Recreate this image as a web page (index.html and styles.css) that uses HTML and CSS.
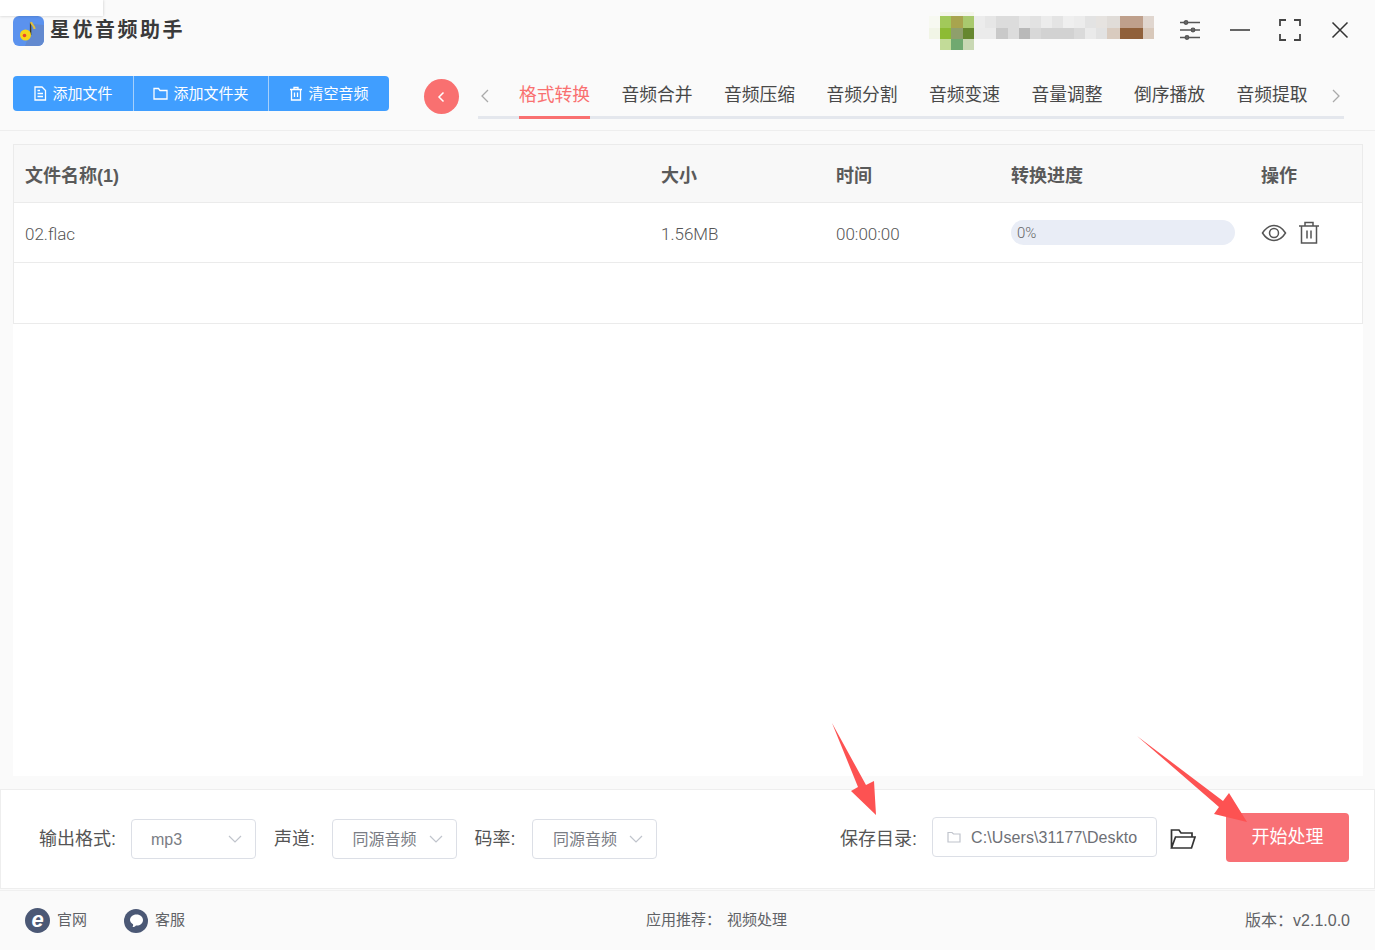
FILE: index.html
```html
<!DOCTYPE html>
<html lang="zh-CN">
<head>
  <meta charset="UTF-8">
  <title>星优音频助手</title>
  <link rel="stylesheet" href="styles.css">
</head>
<body>
  <div class="corner-patch"></div>

  <div class="header">
    <div class="title-row">
      <svg class="logo" width="31" height="30" viewBox="0 0 31 30">
        <rect width="31" height="30" rx="6" fill="#5b92ee"/>
        <path d="M31 9V24a6 6 0 0 1-6 6H12L20 8z" fill="#6289cf"/>
        <path d="M17.6 6.500V19" stroke="#3f3a20" stroke-width="1.400" fill="none"/>
        <path d="M18 6c.5 3 3.500 3 3.500 7" stroke="#e0c040" stroke-width="2" fill="none"/>
        <circle cx="12.500" cy="19" r="5.500" fill="#f7d417"/>
        <circle cx="11.500" cy="19.500" r="1.800" fill="#e8452c"/>
      </svg>
      <div class="app-title">星优音频助手</div>
      <svg class="mosaic" width="225" height="38" viewBox="929 12 225 38">
        <rect x="929" y="16" width="11" height="12" fill="#f7f9f1"/>
        <rect x="929" y="28" width="11" height="11" fill="#f1f5e6"/>
        <rect x="940" y="12" width="34" height="4" fill="#f4f6ea"/>
        <rect x="940" y="16" width="11" height="12" fill="#a2c95a"/>
        <rect x="951" y="16" width="12" height="12" fill="#a8a44e"/>
        <rect x="963" y="16" width="11" height="12" fill="#a9c96e"/>
        <rect x="940" y="28" width="11" height="11" fill="#8dbb34"/>
        <rect x="951" y="28" width="12" height="11" fill="#8f9f6c"/>
        <rect x="963" y="28" width="11" height="11" fill="#66872f"/>
        <rect x="940" y="39" width="11" height="11" fill="#c2db98"/>
        <rect x="951" y="39" width="12" height="11" fill="#70a970"/>
        <rect x="963" y="39" width="11" height="11" fill="#c9d8b4"/>
        <rect x="974" y="16" width="11" height="12" fill="#ececec"/>
        <rect x="985" y="16" width="11" height="12" fill="#e6e6e6"/>
        <rect x="996" y="16" width="23" height="12" fill="#dcdcdc"/>
        <rect x="1019" y="16" width="11" height="12" fill="#e6e6e6"/>
        <rect x="1030" y="16" width="11" height="12" fill="#e2e2e2"/>
        <rect x="1041" y="16" width="11" height="12" fill="#ececec"/>
        <rect x="1052" y="16" width="11" height="12" fill="#e4e4e4"/>
        <rect x="1063" y="16" width="11" height="12" fill="#efefef"/>
        <rect x="1074" y="16" width="11" height="12" fill="#ececec"/>
        <rect x="1085" y="16" width="11" height="12" fill="#e3e3e3"/>
        <rect x="1096" y="16" width="11" height="12" fill="#e6e3e0"/>
        <rect x="1107" y="16" width="13" height="12" fill="#e0dcd8"/>
        <rect x="1120" y="16" width="23" height="12" fill="#bfa08c"/>
        <rect x="1143" y="16" width="11" height="12" fill="#e0d6cf"/>
        <rect x="974" y="28" width="22" height="11" fill="#ebebeb"/>
        <rect x="996" y="28" width="12" height="11" fill="#c9c9c9"/>
        <rect x="1008" y="28" width="11" height="11" fill="#dcdcdc"/>
        <rect x="1019" y="28" width="11" height="11" fill="#b9b9b9"/>
        <rect x="1030" y="28" width="11" height="11" fill="#d8d8d8"/>
        <rect x="1041" y="28" width="33" height="11" fill="#d2d2d2"/>
        <rect x="1074" y="28" width="11" height="11" fill="#dadada"/>
        <rect x="1085" y="28" width="11" height="11" fill="#eaeaea"/>
        <rect x="1096" y="28" width="11" height="11" fill="#e2e2e2"/>
        <rect x="1107" y="28" width="13" height="11" fill="#d9cbbf"/>
        <rect x="1120" y="28" width="23" height="11" fill="#90603a"/>
        <rect x="1143" y="28" width="11" height="11" fill="#d8c8ba"/>
      </svg>
      <div class="win-controls">
        <div class="win-btn">
          <svg width="22" height="22" viewBox="0 0 22 22" fill="none" stroke="#555" stroke-width="1.300">
            <path d="M1 3.500H21M1 11H21M1 18.500H21"/>
            <circle cx="7" cy="3.500" r="1.800" fill="#666"/>
            <circle cx="14" cy="11" r="1.800" fill="#666"/>
            <circle cx="8" cy="18.500" r="1.800" fill="#666"/>
          </svg>
        </div>
        <div class="win-btn">
          <svg width="22" height="22" viewBox="0 0 22 22" fill="none" stroke="#333" stroke-width="1.500"><path d="M1 11H21"/></svg>
        </div>
        <div class="win-btn">
          <svg width="24" height="24" viewBox="0 0 24 24" fill="none" stroke="#444" stroke-width="1.800"><path d="M2 8V2H8M16 2H22V8M22 16V22H16M8 22H2V16"/></svg>
        </div>
        <div class="win-btn">
          <svg width="18" height="18" viewBox="0 0 18 18" fill="none" stroke="#333" stroke-width="1.500"><path d="M1.500 1.500L16.500 16.500M16.500 1.500L1.500 16.500"/></svg>
        </div>
      </div>
    </div>

    <div class="tool-row">
      <div class="btn-group">
        <div class="tool-btn btn-file">
          <svg width="14" height="15" viewBox="0 0 14 15" fill="none" stroke="#fff" stroke-width="1.300"><path d="M2 1H9L12.500 4.500V14H2zM4.500 7.500H10M4.500 10.500H10M4.500 4.500H7"/></svg>
          <span>添加文件</span>
        </div>
        <div class="tool-btn btn-folder">
          <svg width="15" height="13" viewBox="0 0 15 13" fill="none" stroke="#fff" stroke-width="1.300"><path d="M1 2V12H14V3.500H7L5.500 1.500H1z"/></svg>
          <span>添加文件夹</span>
        </div>
        <div class="tool-btn btn-clear">
          <svg width="14" height="15" viewBox="0 0 14 15" fill="none" stroke="#fff" stroke-width="1.300"><path d="M1 3.500H13M5 3.500V1.500H9V3.500M2.500 3.500V14H11.500V3.500M5.500 6.500V11M8.500 6.500V11"/></svg>
          <span>清空音频</span>
        </div>
      </div>

      <div class="back-circle">
        <svg width="10" height="12" viewBox="0 0 10 12" fill="none" stroke="#fff" stroke-width="1.500"><path d="M6.500 1.500L2 6L6.500 10.500"/></svg>
      </div>

      <div class="tabs">
        <svg class="tab-prev" width="10" height="14" viewBox="0 0 10 14" fill="none" stroke="#aaa" stroke-width="1.300"><path d="M8 1L2 7L8 13"/></svg>
        <div class="tab active">格式转换</div>
        <div class="tab">音频合并</div>
        <div class="tab">音频压缩</div>
        <div class="tab">音频分割</div>
        <div class="tab">音频变速</div>
        <div class="tab">音量调整</div>
        <div class="tab">倒序播放</div>
        <div class="tab">音频提取</div>
        <svg class="tab-next" width="10" height="14" viewBox="0 0 10 14" fill="none" stroke="#aaa" stroke-width="1.300"><path d="M2 1L8 7L2 13"/></svg>
      </div>
    </div>
  </div>

  <div class="main">
    <div class="panel">
      <div class="table">
        <div class="table-row table-head">
          <div>文件名称(1)</div>
          <div>大小</div>
          <div>时间</div>
          <div>转换进度</div>
          <div>操作</div>
        </div>
        <div class="table-row table-body">
          <div class="cell-text">02.flac</div>
          <div class="cell-text">1.56MB</div>
          <div class="cell-text">00:00:00</div>
          <div><div class="progress">0%</div></div>
          <div class="actions">
            <svg width="26" height="20" viewBox="0 0 26 20" fill="none" stroke="#555" stroke-width="1.500">
              <path d="M1.500 10C5 4.500 9 2.500 13 2.500S21 4.500 24.500 10C21 15.500 17 17.500 13 17.500S5 15.500 1.500 10z"/>
              <circle cx="13" cy="10" r="4.500"/>
            </svg>
            <svg width="22" height="23" viewBox="0 0 22 23" fill="none" stroke="#555" stroke-width="1.500">
              <path d="M1 5H21M7 5V1.500H15V5M3.500 5V22H18.500V5M9 9.500V17.500M13 9.500V17.500"/>
            </svg>
          </div>
        </div>
        <div class="table-empty"></div>
      </div>
    </div>
  </div>

  <div class="options">
    <div class="opt-label">输出格式:</div>
    <div class="select"><span class="select-latin">mp3</span><svg width="14" height="8" viewBox="0 0 14 8" fill="none" stroke="#c0c4cc" stroke-width="1.200"><path d="M1 1L7 7L13 1"/></svg></div>
    <div class="opt-label opt-short">声道:</div>
    <div class="select"><span>同源音频</span><svg width="14" height="8" viewBox="0 0 14 8" fill="none" stroke="#c0c4cc" stroke-width="1.200"><path d="M1 1L7 7L13 1"/></svg></div>
    <div class="opt-label opt-short">码率:</div>
    <div class="select"><span>同源音频</span><svg width="14" height="8" viewBox="0 0 14 8" fill="none" stroke="#c0c4cc" stroke-width="1.200"><path d="M1 1L7 7L13 1"/></svg></div>

    <div class="opt-label save-label">保存目录:</div>
    <div class="path-input">
      <svg width="14" height="12" viewBox="0 0 14 12" fill="none" stroke="#c0c4cc" stroke-width="1.200"><path d="M1 1.500V11H13V3H6.500L5 1.500z"/></svg>
      <span>C:\Users\31177\Deskto</span>
    </div>
    <svg class="open-folder" width="26" height="22" viewBox="0 0 26 22" fill="none" stroke="#333" stroke-width="1.700">
      <path d="M1.500 20V2H9L11 5H22V9M1.500 20L5.500 9H25L21.500 20z"/>
    </svg>
    <div class="start-btn">开始处理</div>
  </div>

  <div class="footer">
    <div class="foot-link">
      <svg width="25" height="25" viewBox="0 0 25 25">
        <circle cx="12.500" cy="12.500" r="12.500" fill="#4b5875"/>
        <text x="12.500" y="19" text-anchor="middle" class="ie-mark">e</text>
      </svg>
      <span class="foot-text">官网</span>
    </div>
    <div class="foot-link foot-service">
      <svg width="24" height="24" viewBox="0 0 24 24">
        <circle cx="12" cy="12" r="12" fill="#4b5875"/>
        <path d="M12.500 5.500C16.500 5.500 19 8 19 11C19 14.500 15.500 17 12 16.500C11 17.500 10 18 8.500 18C9.200 17 9.300 16 9 15.200C7 14 6 12.500 6 11C6 8 8.500 5.500 12.500 5.500z" fill="#fff"/>
      </svg>
      <span class="foot-text">客服</span>
    </div>
    <div class="foot-recommend foot-text">
      <span>应用推荐&#xFF1A;</span>
      <span>视频处理</span>
    </div>
    <div class="foot-version foot-text">版本&#xFF1A;<span class="version-num">v2.1.0.0</span></div>
  </div>

  <!-- 标注箭头 -->
  <svg class="arrow-layer" width="1375" height="950" viewBox="0 0 1375 950">
    <polygon points="832,723 866,785 874,781 876,815 851,791 858,787" fill="#fd5252"/>
    <polygon points="1137,736 1223,801 1229,793 1247,822 1214,814 1219,807" fill="#fd5252"/>
  </svg>
</body>
</html>
```

FILE: styles.css
```css
* {
  margin: 0;
  padding: 0;
  box-sizing: border-box;
}
body {
  font-family: "Liberation Sans", "Noto Sans CJK SC", sans-serif;
  background: #fafafa;
  color: #333;
  width: 1375px;
  height: 950px;
  overflow: hidden;
  display: flex;
  flex-direction: column;
  position: relative;
}
.corner-patch {
  position: absolute;
  left: 0;
  top: 0;
  width: 103px;
  height: 16px;
  background: #fff;
  box-shadow: 0 0 3px rgba(0, 0, 0, 0.2);
}

/* 顶部 */
.header {
  height: 131px;
  padding-top: 16px;
  border-bottom: 1px solid #eeeeee;
}
.title-row {
  display: flex;
  align-items: center;
  height: 30px;
  padding: 0 10px 0 13px;
}
.logo {
  flex-shrink: 0;
}
.app-title {
  margin: 0 0 5px 6px;
  font-size: 20px;
  font-weight: bold;
  letter-spacing: 2.500px;
  color: #3a3a3a;
}
.mosaic {
  margin-left: auto;
}
.win-controls {
  display: flex;
  margin: 0 0 2px 11px;
}
.win-btn {
  width: 50px;
  display: flex;
  justify-content: center;
  align-items: center;
}
.tool-row {
  display: flex;
  align-items: flex-start;
  margin-top: 30px;
  padding-left: 13px;
}
.btn-group {
  display: flex;
  height: 35px;
  border-radius: 4px;
  overflow: hidden;
  background: #409eff;
}
.tool-btn {
  display: flex;
  align-items: center;
  justify-content: center;
  gap: 5px;
  color: #fff;
  font-size: 15px;
  border-right: 1px solid #a6d0fb;
}
.tool-btn span {
  margin-bottom: 3px;
}
.tool-btn:last-child {
  border-right: none;
}
.btn-file {
  width: 121px;
}
.btn-folder {
  width: 135px;
}
.btn-clear {
  width: 120px;
}
.back-circle {
  width: 35px;
  height: 35px;
  margin: 3px 0 0 35px;
  border-radius: 50%;
  background: #f97070;
  display: flex;
  align-items: center;
  justify-content: center;
}
.tabs {
  width: 866px;
  height: 43px;
  margin-left: 19px;
  border-bottom: 3px solid #e4e7ed;
  display: flex;
  align-items: flex-start;
  gap: 31.500px;
}
.tab-prev {
  margin: 13px -30px 0 2px;
}
.tab {
  height: 43px;
  width: 71px;
  line-height: 38px;
  font-size: 17.800px;
  white-space: nowrap;
  color: #484848;
  border-bottom: 3px solid transparent;
}
.tab-prev + .tab {
  margin-left: 27.500px;
}
.tab.active {
  color: #f97070;
  border-bottom-color: #f97070;
}
.tab-next {
  margin: 13px 0 0 -8px;
}

/* 文件列表 */
.main {
  flex: 1;
  padding: 13px 12px 13px 13px;
  display: flex;
}
.panel {
  flex: 1;
  background: #fff;
}
.table {
  border: 1px solid #ebebeb;
}
.table-row {
  display: grid;
  grid-template-columns: 635px 175px 175px 250px 113px;
  align-items: center;
  border-bottom: 1px solid #ebebeb;
}
.table-row > div {
  padding-left: 12px;
}
.table-row > div:first-child {
  padding-left: 11px;
}
.table-head {
  height: 58px;
  background: #f8f8f8;
  font-size: 18px;
  font-weight: bold;
  color: #5a5a5a;
}
.table-body {
  height: 60px;
  font-family: Roboto, "Noto Sans CJK SC", sans-serif;
  font-size: 17px;
  font-weight: 300;
  color: #555;
}
.cell-text {
  padding-top: 2px;
}
.table-empty {
  height: 60px;
}
.progress {
  width: 224px;
  height: 25px;
  line-height: 27px;
  padding-left: 6px;
  border-radius: 13px;
  background: #e9edf6;
  font-size: 15px;
  color: #666;
}
.actions {
  display: flex;
  align-items: center;
  gap: 11px;
}

/* 底部设置 */
.options {
  height: 100px;
  background: #fff;
  border: 1px solid #eeeeee;
  display: flex;
  align-items: center;
  padding: 0 25px 0 38px;
}
.opt-label {
  font-size: 18px;
  color: #555;
  margin: 0 15px 4px 0;
  white-space: nowrap;
}
.opt-short {
  width: 57.500px;
  margin-right: 0;
}
.select {
  width: 125px;
  height: 40px;
  margin-right: 18px;
  padding: 0 13px 0 20px;
  border: 1px solid #dcdfe6;
  border-radius: 4px;
  display: flex;
  align-items: center;
  justify-content: space-between;
  font-size: 16px;
  color: #7a7d84;
}
.select span {
  white-space: nowrap;
  margin-bottom: 2px;
}
.select .select-latin {
  margin: 1px 0 0 -1px;
}
.save-label {
  margin-left: auto;
}
.path-input {
  width: 225px;
  height: 40px;
  margin-bottom: 4px;
  padding-left: 14px;
  border: 1px solid #dcdfe6;
  border-radius: 4px;
  display: flex;
  align-items: center;
  gap: 10px;
  font-size: 16px;
  letter-spacing: 0.100px;
  color: #6e7076;
  white-space: nowrap;
}
.path-input span {
  margin-top: 2px;
}
.open-folder {
  margin: 0 30px 0 13px;
}
.start-btn {
  width: 123px;
  height: 49px;
  line-height: 49px;
  margin-top: -4px;
  text-align: center;
  border-radius: 4px;
  background: #f87075;
  color: #fff;
  font-size: 18px;
}

/* 页脚 */
.footer {
  height: 60px;
  margin-top: 1px;
  border-top: 1px solid #f0f0f0;
  padding: 0 25px;
  display: flex;
  align-items: center;
  font-size: 15px;
  color: #606266;
}
.foot-text {
  margin-bottom: 4px;
}
.foot-link {
  display: flex;
  align-items: center;
  gap: 7px;
  white-space: nowrap;
}
.foot-service {
  margin-left: 37px;
}
.ie-mark {
  font-size: 22px;
  font-weight: bold;
  font-style: italic;
  fill: #fff;
}
.foot-recommend {
  margin-left: 461px;
  display: flex;
  gap: 6px;
}
.foot-version {
  margin-left: auto;
  font-size: 16px;
}

.arrow-layer {
  position: absolute;
  left: 0;
  top: 0;
  pointer-events: none;
}
```
